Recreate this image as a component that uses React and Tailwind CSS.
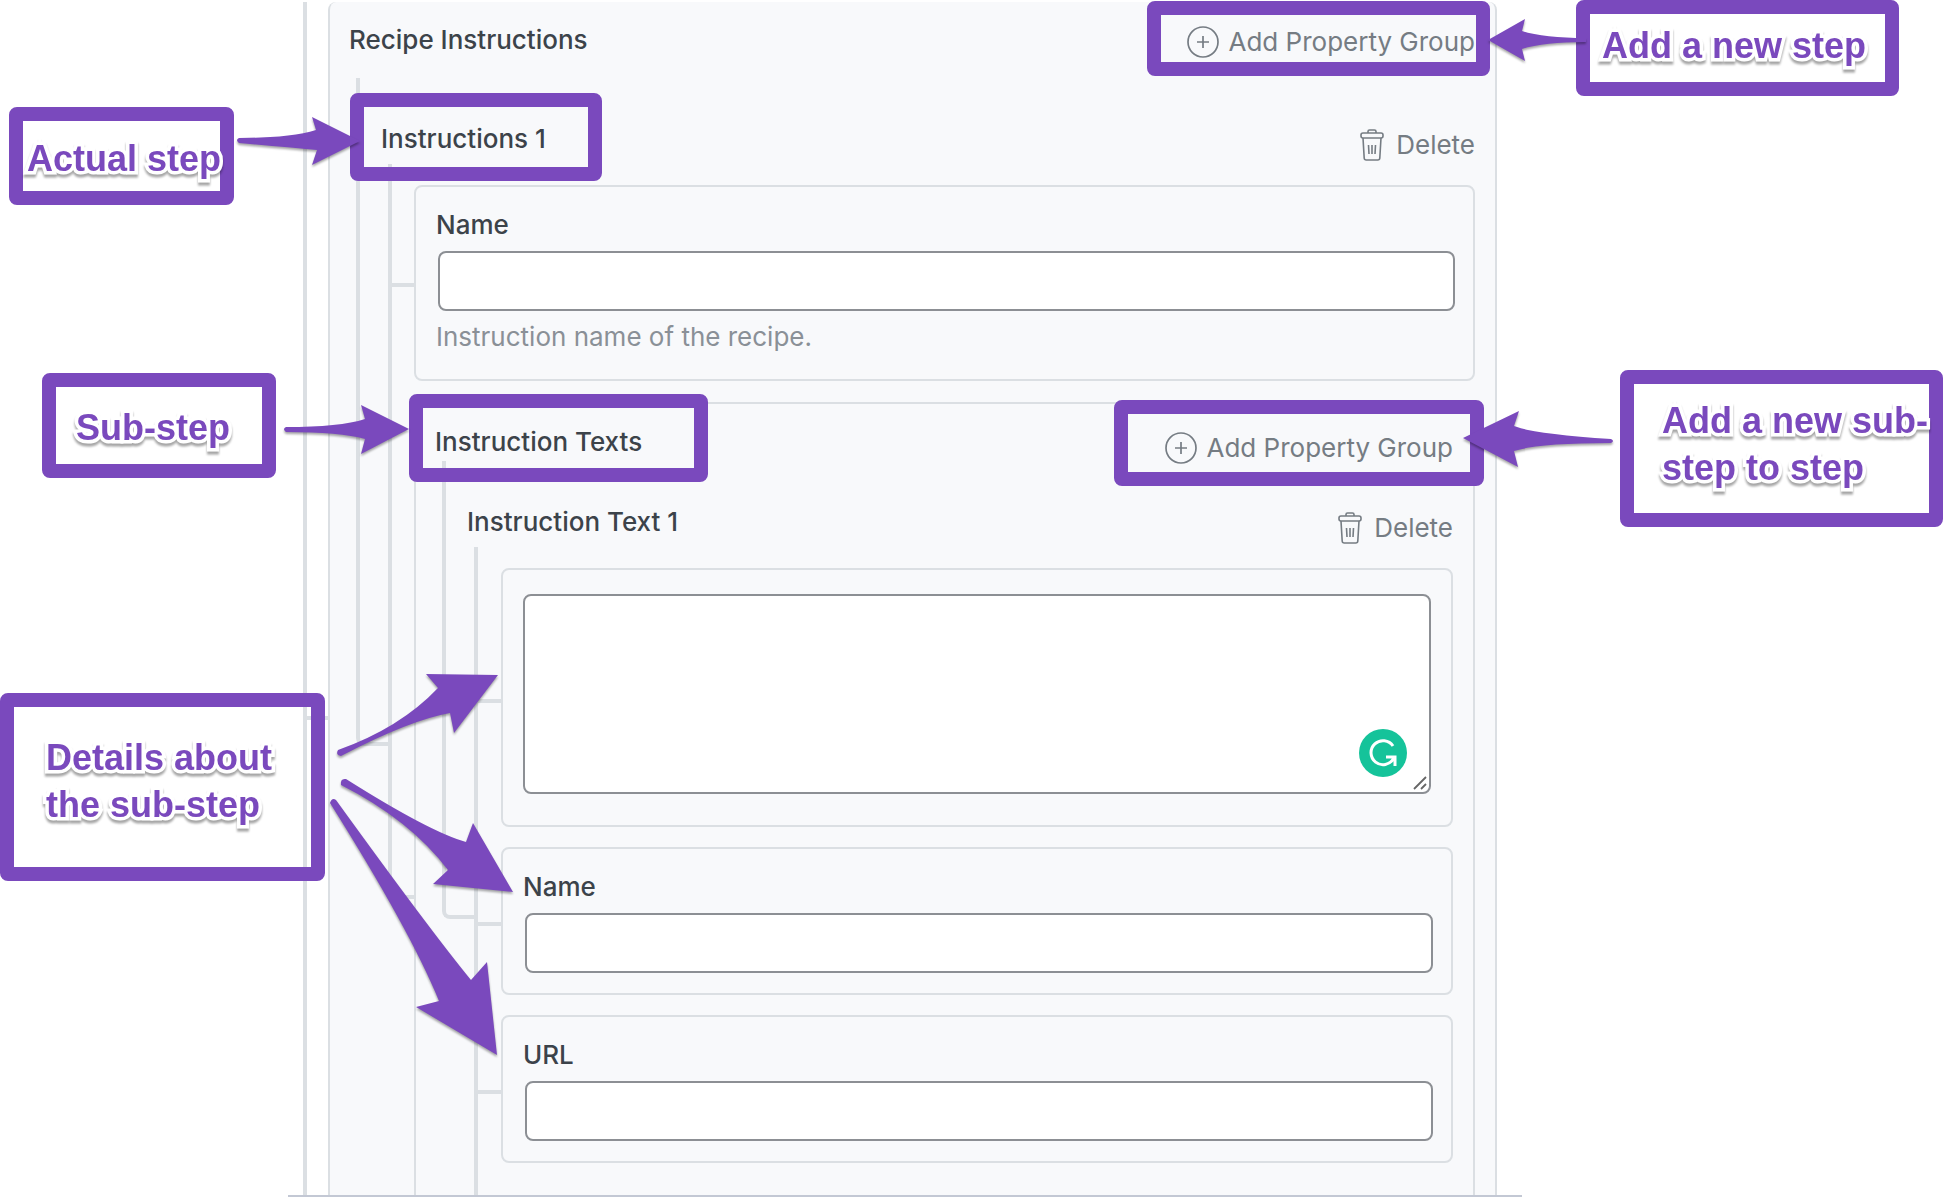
import React from 'react';

const Field = ({ id, label, hint }) => (
  <div className="rounded-lg border-2 border-[#dbdfe3] px-5 pt-5 pb-5">
    <label htmlFor={id} className="block h-11 text-[26px] leading-9 font-medium text-[#3c434a]">{label}</label>
    <input
      id={id}
      type="text"
      className="ml-0.5 block h-15 w-full rounded-lg border-2 border-[#8c8f94] bg-white px-4 text-[26px] outline-none"
    />
    {hint && <p className="mt-2 h-10 text-[26px] leading-9 text-[#8a9097]">{hint}</p>}
  </div>
);

const AddButton = () => (
  <button type="button" className="flex items-center gap-2.5 text-[26px] leading-8 text-[#757c83]">
    <svg viewBox="0 0 32 32" className="size-8" fill="none" stroke="currentColor" strokeWidth="1.7">
      <circle cx="16" cy="16" r="15" />
      <path d="M16 10v12M10 16h12" />
    </svg>
    Add Property Group
  </button>
);

const DeleteButton = () => (
  <button type="button" className="flex items-center gap-3 text-[26px] leading-8 text-[#757c83]">
    <svg viewBox="0 0 24 32" className="h-8 w-6" fill="none" stroke="currentColor" strokeWidth="1.6">
      <path d="M8 4V2.500q0-1.500 1.500-1.500h5q1.500 0 1.500 1.500V4" />
      <rect x="1" y="4" width="22" height="5" rx="2" />
      <path d="M3 9l1.200 20q.1 2 2 2h11.600q1.900 0 2-2L21 9M8.500 16l.5 9M12 16v9M15.500 16l-.5 9" />
    </svg>
    Delete
  </button>
);

const Callout = ({ className, children }) => (
  <div className={`absolute rounded-lg border-14 border-[#7a49bd] font-['Liberation_Sans',Arial,sans-serif] text-[36px] leading-[47px] font-bold text-[#7a49bd] ${className}`}>
    {children && (
      <p className="drop-shadow-[0_3px_1px_rgba(0,0,0,0.35)] [-webkit-text-stroke:7px_white] [paint-order:stroke_fill]">
        {children}
      </p>
    )}
  </div>
);

const App = () => {
  return (
    <div className="relative overflow-hidden bg-white pb-[6px] font-['Inter',sans-serif]">
      <main className="mr-[422px] ml-[288px] border-b-2 border-[#c3c8d4] pt-0.5 pr-[25px] pl-[15px]">
        <div className="flex">
          <div className="w-[25px] shrink-0 border-l-4 border-[#dbdfe3]">
            <div className="h-[718px] border-b-4 border-[#dbdfe3]" />
          </div>

          <section className="min-w-0 flex-1 rounded-t-lg border-x-2 border-[#dbdfe3] bg-[#f8f9fb] pr-5 pl-[26px]">
            <div className="flex h-19 items-start justify-between">
              <h2 className="-ml-[7px] pt-5 text-[26px] leading-9 font-medium text-[#3c434a]">Recipe Instructions</h2>
              <div className="pt-6">
                <AddButton />
              </div>
            </div>

            <div className="flex items-start">
              <div className="h-[668px] w-8 shrink-0 rounded-bl-lg border-b-4 border-l-4 border-[#dbdfe3]" />

              <div className="min-w-0 flex-1">
                <div className="flex h-[86px] items-start justify-between">
                  <h3 className="-ml-[7px] pt-[43px] text-[26px] leading-9 font-medium text-[#3c434a]">Instructions 1</h3>
                  <div className="pt-[51px]">
                    <DeleteButton />
                  </div>
                </div>

                <div className="flex items-start">
                  <div className="w-[26px] shrink-0">
                    <div className="h-[123px] border-b-4 border-l-4 border-[#dbdfe3]" />
                    <div className="h-[612px] rounded-bl-lg border-b-4 border-l-4 border-[#dbdfe3]" />
                  </div>

                  <div className="flex min-w-0 flex-1 flex-col gap-[21px] pt-[21px]">
                    <Field id="instruction-name" label="Name" hint="Instruction name of the recipe." />

                    <section className="rounded-t-lg border-x-2 border-t-2 border-[#dbdfe3] pr-5 pl-[26px]">
                      <div className="flex h-[57px] items-start justify-between">
                        <h3 className="-ml-[7px] pt-5 text-[26px] leading-9 font-medium text-[#3c434a]">Instruction Texts</h3>
                        <div className="pt-7">
                          <AddButton />
                        </div>
                      </div>

                      <div className="flex items-start">
                        <div className="h-[458px] w-8 shrink-0 rounded-bl-lg border-b-4 border-l-4 border-[#dbdfe3]" />

                        <div className="min-w-0 flex-1">
                          <div className="flex h-[86px] items-start justify-between">
                            <h4 className="-ml-[7px] pt-[43px] text-[26px] leading-9 font-medium text-[#3c434a]">Instruction Text 1</h4>
                            <div className="pt-[51px]">
                              <DeleteButton />
                            </div>
                          </div>

                          <div className="flex">
                            <div className="flex w-[27px] shrink-0 flex-col">
                              <div className="h-[156px] border-b-4 border-l-4 border-[#dbdfe3]" />
                              <div className="h-[223px] border-b-4 border-l-4 border-[#dbdfe3]" />
                              <div className="h-[168px] border-b-4 border-l-4 border-[#dbdfe3]" />
                              <div className="flex-1 border-l-4 border-[#dbdfe3]" />
                            </div>

                            <div className="flex min-w-0 flex-1 flex-col gap-5 pt-[21px] pb-8">
                              <div className="rounded-lg border-2 border-[#dbdfe3] px-5 pt-6 pb-[31px]">
                                <div className="relative">
                                  <textarea
                                    aria-label="Instruction text"
                                    className="block h-[200px] w-full resize-none rounded-lg border-2 border-[#8c8f94] bg-white p-4 text-[26px] outline-none"
                                  />
                                  <svg viewBox="0 0 48 48" className="absolute right-6 bottom-[17px] size-12">
                                    <circle cx="24" cy="24" r="24" fill="#15c39a" />
                                    <path d="M34 17a12 12 0 1 0 .5 12.500M27 28h9v9" fill="none" stroke="#fff" strokeWidth="3" />
                                  </svg>
                                  <svg viewBox="0 0 14 14" className="absolute right-1 bottom-1 size-3.5" stroke="#666" strokeWidth="1.800">
                                    <path d="M1 13L13 1M8 13l5-5" />
                                  </svg>
                                </div>
                              </div>
                              <Field id="text-name" label="Name" />
                              <Field id="text-url" label="URL" />
                            </div>
                          </div>
                        </div>
                      </div>
                    </section>
                  </div>
                </div>
              </div>
            </div>
          </section>
        </div>
      </main>

      {/* Highlights around the form controls */}
      <Callout className="top-[93px] left-[350px] h-22 w-[252px]" />
      <Callout className="top-[394px] left-[409px] h-22 w-[299px]" />
      <Callout className="top-px right-[454px] h-[75px] w-[343px]" />
      <Callout className="top-[400px] right-[460px] h-[86px] w-[370px]" />

      {/* Notes */}
      <Callout className="top-[107px] left-[9px] h-[98px] w-[225px] pt-[14px] pl-1 whitespace-nowrap">Actual step</Callout>
      <Callout className="top-[373px] left-[42px] h-[105px] w-[234px] pt-[17px] pl-5">Sub-step</Callout>
      <Callout className="top-[693px] left-0 h-[188px] w-[325px] pt-[27px] pl-8">
        Details about<br />the sub-step
      </Callout>
      <Callout className="top-0 right-[45px] h-24 w-[323px] pt-2 pl-3">Add a new step</Callout>
      <Callout className="top-[370px] right-px h-[157px] w-[323px] pt-[13px] pl-7 whitespace-nowrap">
        Add a new sub-<br />step to step
      </Callout>

      <svg viewBox="0 0 520 1080" className="pointer-events-none absolute top-0 left-0 h-[1080px] w-[520px] drop-shadow-[0_2px_1px_rgba(0,0,0,0.35)]" fill="#7a49bd">
        <path d="M239 138Q290 138 316 130L312 117L360 141L312 165L317 150Q295 148 239 143Q235 140 239 138Z" />
        <path d="M286 427Q340 427 365 419L361 405L409 429L361 454L365 439Q340 432 286 432Q282 429 286 427Z" />
        <path d="M338 750Q400 728 438 688L426 674L498 675L454 733L450 713Q410 720 341 756Q335 755 338 750Z" />
        <path d="M346 779Q430 832 466 842L473 823L513 892L433 884L448 870Q410 820 341 785Q340 778 346 779Z" />
        <path d="M336 800Q430 930 471 980L487 962L497 1055L416 1007L439 1001Q410 930 330 803Q332 797 336 800Z" />
      </svg>
      <svg viewBox="0 0 490 480" className="pointer-events-none absolute top-0 right-0 h-[480px] w-[490px] drop-shadow-[0_2px_1px_rgba(0,0,0,0.35)]" fill="#7a49bd">
        <path d="M132 38Q90 38 68 31L71 19L34 40L71 61L68 49Q90 42 132 42Z" />
        <path d="M157 439Q80 434 60 426L65 411L9 438L64 467L60 451Q85 443 157 443Q161 441 157 439Z" />
      </svg>
    </div>
  );
};

export default App;
